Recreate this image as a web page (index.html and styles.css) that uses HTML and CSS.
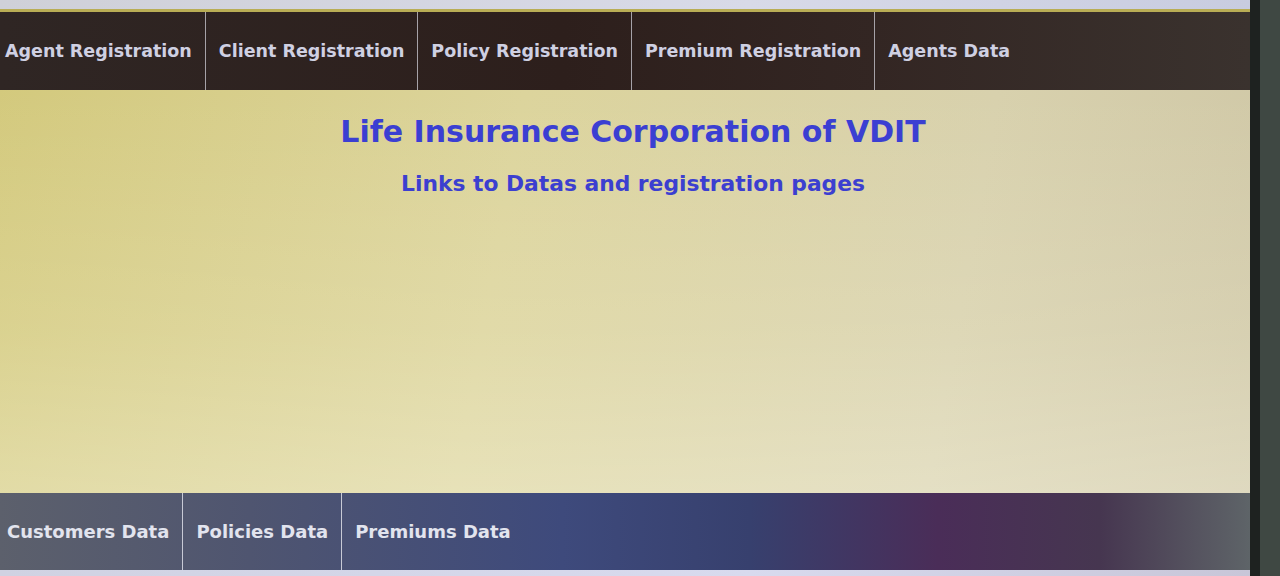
FILE: index.html
```html
<!DOCTYPE html>
<html>
<head>
<meta charset="utf-8">
<title>Life Insurance Corporation of VDIT</title>
<link rel="stylesheet" href="styles.css">
</head>
<body>
<div class="screen">
  <div class="page">
    <div class="chrome"></div>
    <nav class="nav nav-top">
      <a class="nav-link first" href="#">Agent Registration</a>
      <a class="nav-link" href="#">Client Registration</a>
      <a class="nav-link" href="#">Policy Registration</a>
      <a class="nav-link" href="#">Premium Registration</a>
      <a class="nav-link last" href="#">Agents Data</a>
    </nav>
    <main class="main">
      <h1 class="title">Life Insurance Corporation of VDIT</h1>
      <h2 class="subtitle">Links to Datas and registration pages</h2>
    </main>
    <nav class="nav nav-bottom">
      <a class="nav-link first" href="#">Customers Data</a>
      <a class="nav-link" href="#">Policies Data</a>
      <a class="nav-link last" href="#">Premiums Data</a>
    </nav>
    <div class="footer-strip"></div>
  </div>
  <div class="bezel"></div>
</div>
</body>
</html>
```

FILE: styles.css
```css
html, body {
  margin: 0;
  padding: 0;
  height: 100%;
  overflow: hidden;
}
body {
  font-family: "DejaVu Sans", Verdana, sans-serif;
  background: #2b302d;
}
.screen {
  display: grid;
  grid-template-columns: 1250px 1fr;
  height: 576px;
}
.page {
  display: flex;
  flex-direction: column;
  background: linear-gradient(100deg, #d3c97c 0%, #dcd49c 40%, #d8d1ad 75%, #cfc7a6 100%);
}
.chrome {
  height: 9px;
  background: linear-gradient(90deg, #cfd0d8, #d8dae8 60%, #c8cce0);
  border-bottom: 3px solid #b9ad55;
}
.nav {
  display: flex;
  align-items: stretch;
}
.nav-top {
  height: 78px;
  background: linear-gradient(90deg, #2f2624 0%, #2d1f1c 45%, #332623 70%, #3a322e 100%);
}
.nav-bottom {
  height: 77px;
  background: linear-gradient(90deg, #5c606c 0%, #4f5570 20%, #3e4a7c 45%, #37406e 60%, #4a2d58 75%, #463650 88%, #5e6468 100%);
}
.nav-link {
  display: flex;
  align-items: center;
  padding: 0 13px;
  color: #cfd0e2;
  font-weight: bold;
  font-size: 18px;
  text-decoration: none;
  border-right: 1px solid #a6a2a8;
}
.nav-top .nav-link {
  font-size: 17.5px;
}
.nav-link.first {
  padding-left: 5px;
}
.nav-bottom .nav-link.first {
  padding-left: 7px;
}
.nav-link.last {
  border-right: none;
}
.nav-bottom .nav-link {
  color: #e2e4ee;
  border-right-color: #c8cad6;
}
.main {
  flex: 1;
  display: flex;
  flex-direction: column;
  align-items: center;
  padding-left: 16px;
  background: linear-gradient(180deg, rgba(0,0,0,0) 0%, rgba(255,255,240,0.15) 60%, rgba(255,255,245,0.32) 100%);
}
.title {
  margin: 24px 0 0;
  font-size: 30px;
  font-weight: bold;
  color: #3b3fd2;
}
.subtitle {
  margin: 22px 0 0;
  font-size: 21.8px;
  font-weight: bold;
  color: #3c3fd0;
}
.footer-strip {
  height: 6px;
  background: linear-gradient(90deg, #d0d2e2, #d8daee 60%, #c8c6d8);
}
.bezel {
  background: linear-gradient(90deg, #1e2220 0 10px, #3f4843 10px);
}
```
